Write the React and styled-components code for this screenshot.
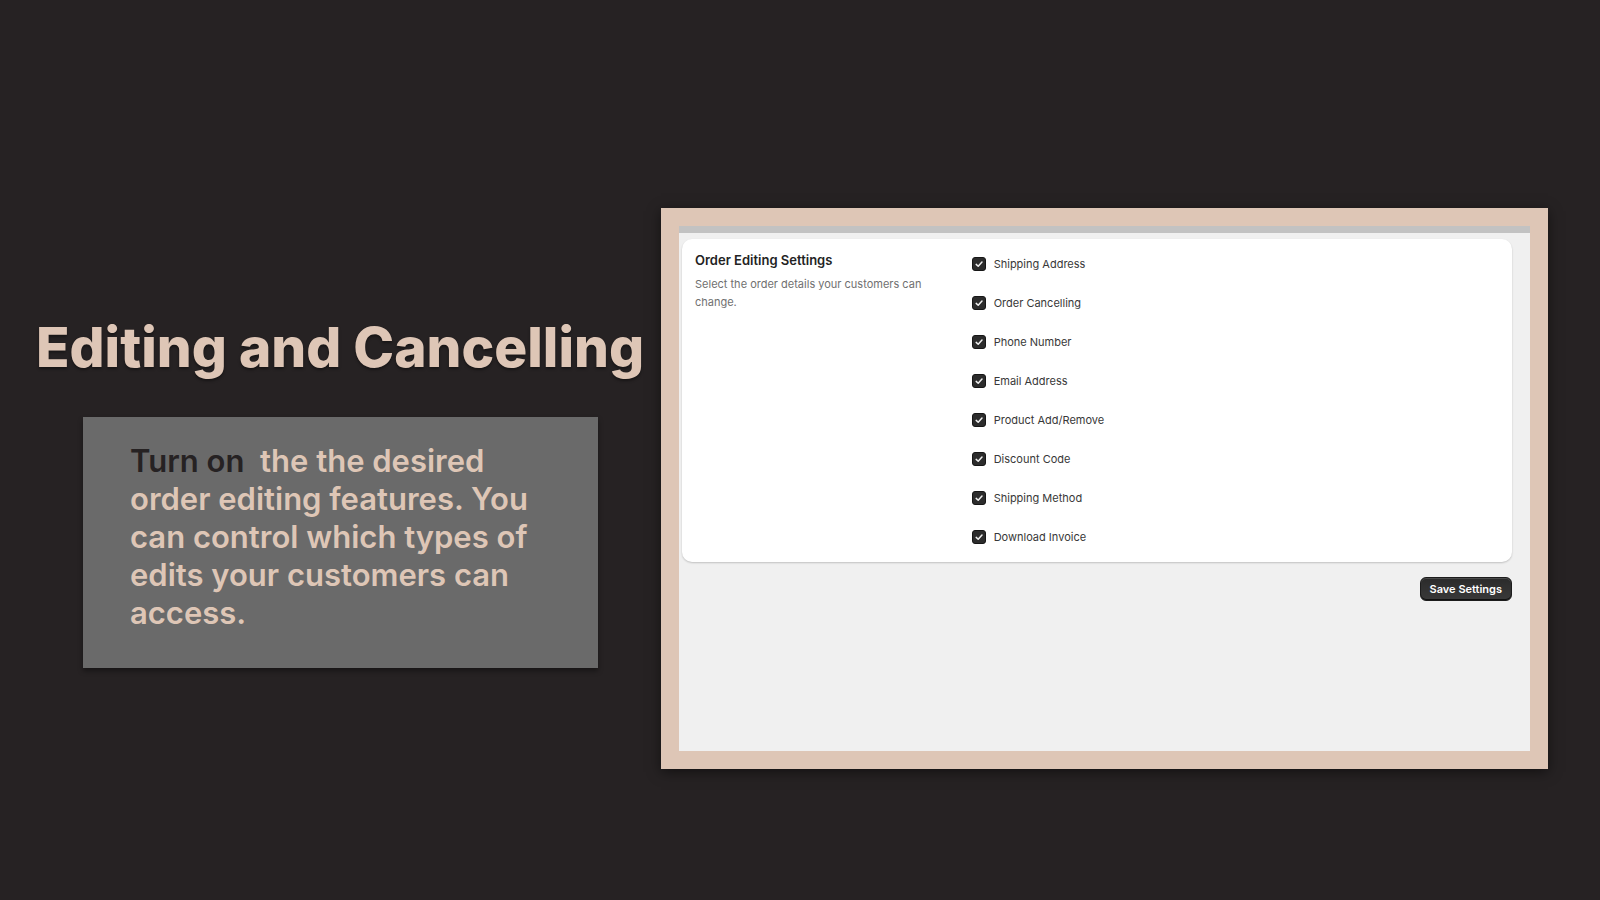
import { useState } from 'react';
import styled, { createGlobalStyle } from 'styled-components';

const GlobalStyle = createGlobalStyle`
  *, *::before, *::after {
    box-sizing: border-box;
  }

  body {
    margin: 0;
    background: #262223;
    font-family: Inter, "Liberation Sans", sans-serif;
  }
`;

const Slide = styled.main`
  display: grid;
  grid-template-columns: minmax(0, 661fr) minmax(0, 887fr);
  align-items: center;
  min-height: 100vh;
  padding: 76px 52px 0 0;
`;

const Intro = styled.section`
  display: flex;
  flex-direction: column;
  gap: 37px;
  padding-top: 5px;
`;

const Title = styled.h1`
  margin: 0;
  padding-left: 36px;
  color: #dec6b6;
  font-size: 55px;
  font-weight: 800;
  line-height: 66px;
  white-space: nowrap;
  text-shadow: 0 2px 3px rgba(0, 0, 0, 0.4);
`;

const Callout = styled.div`
  margin: 0 63px 0 83px;
  padding: 25px 47px 36px;
  background: #6a6a6a;
  box-shadow: 0 3px 5px rgba(0, 0, 0, 0.4);
`;

const CalloutText = styled.p`
  margin: 0;
  color: #dec6b6;
  font-size: 31px;
  font-weight: 600;
  line-height: 38px;
`;

const Highlight = styled.span`
  color: #262223;
  white-space: pre;
`;

const Frame = styled.section`
  padding: 18px;
  background: #dec6b6;
  box-shadow: 0 3px 12px rgba(0, 0, 0, 0.5);
`;

const Screen = styled.form`
  min-height: 525px;
  padding: 6px 18px 18px 3px;
  border-top: 7px solid #c2c2c2;
  background: #f0f0f0;
`;

const Card = styled.div`
  display: grid;
  grid-template-columns: 1fr 2fr;
  gap: 13px;
  padding: 12px 13px;
  border-radius: 10px;
  background: #fff;
  box-shadow: 0 1px 2px rgba(0, 0, 0, 0.2);
`;

const CardHeading = styled.h2`
  margin: 0;
  color: #232323;
  font-size: 13px;
  font-weight: 600;
  line-height: 18px;
`;

const CardText = styled.p`
  max-width: 240px;
  margin: 6px 0 0;
  color: #707070;
  font-size: 11px;
  line-height: 18px;
`;

const OptionList = styled.div`
  display: flex;
  flex-direction: column;
  gap: 13px;
`;

const Option = styled.label`
  display: flex;
  align-items: center;
  gap: 8px;
  height: 26px;
  color: #383838;
  font-size: 11px;
`;

const CheckboxBox = styled.span`
  display: grid;
  width: 14px;
  height: 14px;

  > * {
    grid-area: 1 / 1;
  }
`;

const Checkbox = styled.input`
  appearance: none;
  width: 14px;
  height: 14px;
  margin: 0;
  border: 1px solid #8a8a8a;
  border-radius: 3px;
  background: #fff;

  &:checked {
    border-color: #161616;
    background: #2c2c2c;
  }
`;

const CheckMark = styled.svg`
  width: 14px;
  height: 14px;
  pointer-events: none;
`;

const Actions = styled.div`
  display: flex;
  justify-content: flex-end;
  margin-top: 15px;
`;

const SaveButton = styled.button`
  height: 24px;
  padding: 0 9px;
  border: 1px solid #1c1c1c;
  border-radius: 6px;
  background: linear-gradient(#2b2b2b, #393939);
  box-shadow: inset 0 1px 0 #4a4a4a, inset 0 -1px 0 #111;
  color: #fff;
  font-family: inherit;
  font-size: 11px;
  font-weight: 600;
  cursor: pointer;
`;

const options = [
  { id: 'shippingAddress', label: 'Shipping Address' },
  { id: 'orderCancelling', label: 'Order Cancelling' },
  { id: 'phoneNumber', label: 'Phone Number' },
  { id: 'emailAddress', label: 'Email Address' },
  { id: 'productAddRemove', label: 'Product Add/Remove' },
  { id: 'discountCode', label: 'Discount Code' },
  { id: 'shippingMethod', label: 'Shipping Method' },
  { id: 'downloadInvoice', label: 'Download Invoice' },
];

const OrderEditingSettings = () => {
  const [enabled, setEnabled] = useState(options.map((option) => option.id));

  const toggle = (id) => {
    setEnabled(enabled.includes(id) ? enabled.filter((item) => item !== id) : [...enabled, id]);
  };

  return (
    <Screen onSubmit={(e) => e.preventDefault()}>
      <Card>
        <div>
          <CardHeading>Order Editing Settings</CardHeading>
          <CardText>Select the order details your customers can change.</CardText>
        </div>

        <OptionList>
          {options.map((option) => (
            <Option key={option.id} htmlFor={option.id}>
              <CheckboxBox>
                <Checkbox
                  id={option.id}
                  type="checkbox"
                  checked={enabled.includes(option.id)}
                  onChange={() => toggle(option.id)}
                />
                {enabled.includes(option.id) && (
                  <CheckMark viewBox="0 0 14 14" fill="none" aria-hidden="true">
                    <path d="M4.2 7.4 6.2 9.2 10 5" stroke="#f0f0f0" strokeWidth="1.5" strokeLinecap="round" strokeLinejoin="round" />
                  </CheckMark>
                )}
              </CheckboxBox>
              {option.label}
            </Option>
          ))}
        </OptionList>
      </Card>

      <Actions>
        <SaveButton type="submit">Save Settings</SaveButton>
      </Actions>
    </Screen>
  );
};

const App = () => (
  <>
    <GlobalStyle />
    <Slide>
      <Intro>
        <Title>Editing and Cancelling</Title>
        <Callout>
          <CalloutText>
            <Highlight>Turn on  </Highlight>
            the the desired order editing features. You can control which types of edits your customers can access.
          </CalloutText>
        </Callout>
      </Intro>

      <Frame>
        <OrderEditingSettings />
      </Frame>
    </Slide>
  </>
);

export default App;
